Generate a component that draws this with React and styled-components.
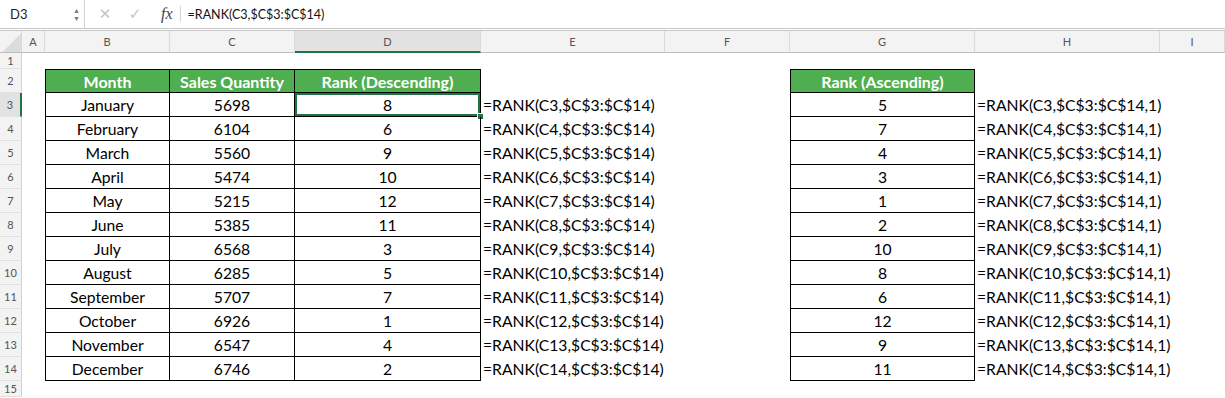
import styled, { createGlobalStyle } from "styled-components"

const GlobalStyle = createGlobalStyle`
    body {
        margin: 0;
        background: #ffffff;
        font-family: "Lato", "Liberation Sans", sans-serif;
    }
`

const columns = ["A", "B", "C", "D", "E", "F", "G", "H", "I"]
const widths = "22px 23px 125px 125px 186px 184px 125px 185px 185px 1fr"

const months = [
    ["January", 5698, 8, 5],
    ["February", 6104, 6, 7],
    ["March", 5560, 9, 4],
    ["April", 5474, 10, 3],
    ["May", 5215, 12, 1],
    ["June", 5385, 11, 2],
    ["July", 6568, 3, 10],
    ["August", 6285, 5, 8],
    ["September", 5707, 7, 6],
    ["October", 6926, 1, 12],
    ["November", 6547, 4, 9],
    ["December", 6746, 2, 11],
]

export default function App() {
    return (
        <Page>
            <GlobalStyle />
            <FormulaBar>
                <NameBox>
                    <span>D3</span>
                    <Spinner>
                        <span>▲</span>
                        <span>▼</span>
                    </Spinner>
                </NameBox>
                <BarIcon>✕</BarIcon>
                <BarIcon>✓</BarIcon>
                <Fx>fx</Fx>
                <Formula>=RANK(C3,$C$3:$C$14)</Formula>
            </FormulaBar>

            <Sheet>
                <Corner />
                {columns.map((c) => (
                    <ColHead key={c} $active={c === "D"}>{c}</ColHead>
                ))}

                <RowHead>1</RowHead>
                {columns.map((c) => <Cell key={c} />)}

                <RowHead $tall>2</RowHead>
                <Cell />
                <HeadCell $first>Month</HeadCell>
                <HeadCell>Sales Quantity</HeadCell>
                <HeadCell>Rank (Descending)</HeadCell>
                <Cell />
                <Cell />
                <HeadCell $first>Rank (Ascending)</HeadCell>
                <Cell />
                <Cell />

                {months.map(([name, qty, desc, asc], i) => {
                    const r = i + 3
                    return [
                        <RowHead key={`h${r}`} $tall $active={r === 3}>{r}</RowHead>,
                        <Cell key={`a${r}`} />,
                        <DataCell key={`b${r}`} $first>{name}</DataCell>,
                        <DataCell key={`c${r}`}>{qty}</DataCell>,
                        <DataCell key={`d${r}`} $selected={r === 3}>
                            {desc}
                            {r === 3 && <Handle />}
                        </DataCell>,
                        <TextCell key={`e${r}`}>=RANK(C{r},$C$3:$C$14)</TextCell>,
                        <Cell key={`f${r}`} />,
                        <DataCell key={`g${r}`} $first>{asc}</DataCell>,
                        <TextCell key={`h${r}`}>=RANK(C{r},$C$3:$C$14,1)</TextCell>,
                        <Cell key={`i${r}`} />,
                    ]
                })}

                <RowHead>15</RowHead>
                {columns.map((c) => <Cell key={c} />)}
            </Sheet>
        </Page>
    )
}

const Page = styled.div`
    width: 1225px;
    height: 398px;
    overflow: hidden;
    background: #fff;
`

const FormulaBar = styled.div`
    display: flex;
    align-items: center;
    height: 28px;
    border-bottom: 3px double #c6c6c6;
    background: #fff;
`

const NameBox = styled.div`
    display: flex;
    align-items: center;
    justify-content: space-between;
    box-sizing: border-box;
    width: 85px;
    height: 28px;
    padding: 0 4px 0 10px;
    border-right: 1px solid #d4d4d4;
    font-size: 13px;
    color: #222;
`

const Spinner = styled.div`
    display: flex;
    flex-direction: column;
    font-size: 7px;
    line-height: 8px;
    color: #777;
`

const BarIcon = styled.span`
    width: 30px;
    text-align: center;
    font-family: "DejaVu Sans", sans-serif;
    font-size: 15px;
    color: #c4c4c4;
    &:first-of-type {
        margin-left: 5px;
    }
`

const Fx = styled.span`
    margin-left: 11px;
    padding-right: 7px;
    border-right: 1px solid #d4d4d4;
    font-family: "Liberation Serif", serif;
    font-style: italic;
    font-size: 16px;
    line-height: 16px;
    color: #444;
`

const Formula = styled.span`
    margin-left: 7px;
    font-size: 12.5px;
    color: #111;
`

const Sheet = styled.div`
    display: grid;
    grid-template-columns: ${widths};
    grid-auto-rows: auto;
`

const Corner = styled.div`
    height: 21px;
    background: linear-gradient(135deg, #f3f3f3 55%, #dcdcdc 55%);
    border-right: 1px solid #d8d8d8;
    border-bottom: 1px solid #bdbdbd;
`

const ColHead = styled.div`
    display: flex;
    align-items: center;
    justify-content: center;
    box-sizing: border-box;
    height: 22px;
    background: ${(p) => (p.$active ? "#e2e2e2" : "#f3f3f3")};
    border-right: 1px solid #dadada;
    border-bottom: ${(p) => (p.$active ? "2px solid #217346" : "1px solid #bdbdbd")};
    font-size: 11px;
    color: #555;
`

const RowHead = styled.div`
    display: flex;
    align-items: center;
    justify-content: center;
    box-sizing: border-box;
    height: ${(p) => (p.$tall ? "24px" : "16px")};
    background: ${(p) => (p.$active ? "#e2e2e2" : "#f3f3f3")};
    border-right: ${(p) => (p.$active ? "2px solid #217346" : "1px solid #d2d2d2")};
    border-bottom: 1px solid #e0e0e0;
    font-size: 11px;
    color: #555;
`

const Cell = styled.div`
    min-width: 0;
`

const HeadCell = styled.div`
    display: flex;
    align-items: center;
    justify-content: center;
    box-sizing: border-box;
    background: #4fae4f;
    border: 1px solid #000;
    border-left-width: ${(p) => (p.$first ? "1px" : "0")};
    font-size: 16px;
    font-weight: 700;
    color: #fff;
    white-space: nowrap;
`

const DataCell = styled.div`
    position: relative;
    display: flex;
    align-items: center;
    justify-content: center;
    box-sizing: border-box;
    border-right: 1px solid #000;
    border-bottom: 1px solid #000;
    border-left: ${(p) => (p.$first ? "1px solid #000" : "0")};
    box-shadow: ${(p) => (p.$selected ? "inset 0 0 0 2px #217346" : "none")};
    font-size: 15.7px;
    color: #000;
`

const Handle = styled.span`
    position: absolute;
    right: -4px;
    bottom: -4px;
    width: 5px;
    height: 5px;
    background: #217346;
    border: 1px solid #fff;
`

const TextCell = styled.div`
    display: flex;
    align-items: center;
    padding-left: 2px;
    font-size: 15.7px;
    color: #000;
    white-space: nowrap;
    overflow: visible;
`
